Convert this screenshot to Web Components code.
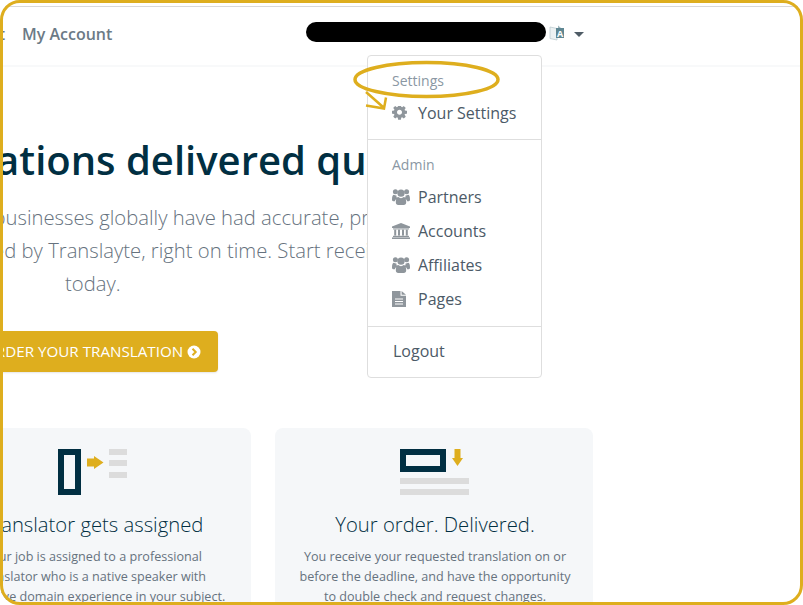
<!DOCTYPE html>
<html lang="en">
<head>
<meta charset="utf-8">
<title>Translayte</title>
<style>
  html, body { margin: 0; padding: 0; background: #fff; }
  body { font-family: "Open Sans", "Liberation Sans", sans-serif; }
</style>
</head>
<body>
<page-frame>
  <site-nav>
    <a slot="links">Contact</a>
    <a slot="links">My Account</a>
    <account-menu slot="menu">
      <menu-group label="Settings">
        <menu-item icon="gear">Your Settings</menu-item>
      </menu-group>
      <menu-group label="Admin">
        <menu-item icon="users">Partners</menu-item>
        <menu-item icon="bank">Accounts</menu-item>
        <menu-item icon="users">Affiliates</menu-item>
        <menu-item icon="file">Pages</menu-item>
      </menu-group>
      <menu-group>
        <menu-item>Logout</menu-item>
      </menu-group>
    </account-menu>
  </site-nav>
  <hero-banner>
    <span slot="title">Translations delivered quickly</span>
    <span slot="line1">Thousands of businesses globally have had accurate, professional</span>
    <span slot="line2">translations delivered by Translayte, right on time. Start receiving</span>
    <span slot="line3">today.</span>
    <span slot="action">ORDER YOUR TRANSLATION</span>
  </hero-banner>
  <step-row>
    <step-card art="assign">
      <span slot="title">Translator gets assigned</span>
      Your job is assigned to a professional<br>translator who is a native speaker with<br>extensive domain experience in your subject.
    </step-card>
    <step-card art="deliver">
      <span slot="title">Your order. Delivered.</span>
      You receive your requested translation on or<br>before the deadline, and have the opportunity<br>to double check and request changes.
    </step-card>
  </step-row>
</page-frame>

<script>
const GOLD = "#deae1e"
const NAVY = "#012f42"

const ICONS = {
  gear: `<svg viewBox="0 0 1536 1536" width="15" height="15"><path fill="currentColor" d="M1024 640q0-106-75-181t-181-75-181 75-75 181 75 181 181 75 181-75 75-181zm512-109v222q0 12-8 23t-20 13l-185 28q-19 54-39 91 35 50 107 138 10 12 10 25t-9 23q-27 37-99 108t-94 71q-12 0-26-9l-138-108q-44 23-91 38-16 136-29 186-7 28-36 28h-222q-14 0-24.5-8.5t-11.5-21.5l-28-184q-49-16-90-37l-141 107q-10 9-25 9-14 0-25-11-126-114-165-168-7-10-7-23 0-12 8-23 15-21 51-66.5t54-70.5q-27-50-41-99l-183-27q-13-2-21-12.5t-8-23.5v-222q0-12 8-23t19-13l186-28q14-46 39-92-40-57-107-138-10-12-10-24 0-10 9-23 26-36 98.5-107.5t94.5-71.5q13 0 26 10l138 107q44-23 91-38 16-136 29-186 7-28 36-28h222q14 0 24.5 8.5t11.5 21.5l28 184q49 16 90 37l142-107q9-9 24-9 13 0 25 10 129 119 165 170 7 8 7 22 0 12-8 23-15 21-51 66.5t-54 70.5q26 50 41 98l183 28q13 2 21 12.5t8 23.5z"/></svg>`,
  users: `<svg viewBox="0 0 18 16" width="18" height="16"><g fill="currentColor"><circle cx="3.400" cy="2.800" r="2.500"/><circle cx="14.600" cy="2.800" r="2.500"/><circle cx="9" cy="4.200" r="3.600"/><path d="M0 10.500C0 7.500.7 5.800 2 5.800c.7.500 1.500.8 2.500.7-.2 1.200.2 2.200 1 3-1.400.4-2.300 1.300-2.600 2.700H1.200C.5 12.200 0 11.600 0 10.500z"/><path d="M18 10.500c0-3-.7-4.700-2-4.700-.7.500-1.500.8-2.500.7.200 1.200-.2 2.200-1 3 1.400.4 2.300 1.300 2.600 2.700h1.700c.7 0 1.200-.6 1.200-1.700z"/><path d="M3.800 13.300c0-3.300 1-5.200 2.500-5.200.7.700 1.700 1.100 2.700 1.100s2-.4 2.700-1.100c1.500 0 2.500 1.900 2.500 5.200 0 1.700-1 2.700-2.400 2.700H6.200c-1.400 0-2.400-1-2.400-2.700z"/></g></svg>`,
  bank: `<svg viewBox="0 0 18 16" width="18" height="16"><g fill="currentColor"><path d="M9 0l9 3.400V5H0V3.400z"/><rect x="1" y="5.400" width="16" height="1"/><rect x="2.200" y="6.600" width="2" height="6"/><rect x="6" y="6.600" width="2" height="6"/><rect x="10" y="6.600" width="2" height="6"/><rect x="13.800" y="6.600" width="2" height="6"/><rect x="1" y="12.800" width="16" height="1.200"/><rect x="0" y="14.400" width="18" height="1.600"/></g></svg>`,
  file: `<svg viewBox="0 0 14 16" width="14" height="16"><path fill="currentColor" fill-rule="evenodd" d="M0 0h8.500v4.800H14V16H0zM9.600 0L14 3.800H9.600zM3 7.400v1.200h8V7.400zM3 9.900v1.200h8V9.900zM3 12.400v1.200h8v-1.200z"/></svg>`
}

const ART = {
  assign: `<svg viewBox="0 0 69 46" width="69" height="46">
    <rect x="3" y="3" width="17" height="40" fill="#f5f7f9" stroke="${NAVY}" stroke-width="6"/>
    <path fill="${GOLD}" d="M29 9.500h7V7l9.500 6.500L36 20v-2.500h-7z"/>
    <g fill="#dcdcdc"><rect x="51" y="0" width="18" height="6"/><rect x="51" y="11" width="18" height="6"/><rect x="51" y="23" width="18" height="6"/></g>
  </svg>`,
  deliver: `<svg viewBox="0 0 69 46" width="69" height="46">
    <rect x="3" y="3" width="40" height="17" fill="#f5f7f9" stroke="${NAVY}" stroke-width="6"/>
    <path fill="${GOLD}" d="M54.500 0h6v9H63l-5.500 8L52 9h2.500z"/>
    <g fill="#dcdcdc"><rect x="0" y="29" width="69" height="6"/><rect x="0" y="40" width="69" height="6"/></g>
  </svg>`
}

class PageFrame extends HTMLElement {
  constructor() {
    super()
    this.attachShadow({ mode: "open" })
    this.shadowRoot.innerHTML = `
      <style>
        :host {
          display: flex;
          flex-direction: column;
          position: relative;
          width: 803px;
          height: 605px;
          padding-top: 6px;
          box-sizing: border-box;
          overflow: hidden;
          background: #fff;
          font-family: "Open Sans", "Liberation Sans", sans-serif;
        }
        .border {
          position: absolute;
          inset: 0;
          border: 3px solid ${GOLD};
          border-radius: 20px;
          box-shadow: 0 0 0 20px #fff;
          pointer-events: none;
          z-index: 5;
        }
      </style>
      <slot></slot>
      <div class="border"></div>
    `
  }
}

class SiteNav extends HTMLElement {
  constructor() {
    super()
    this.attachShadow({ mode: "open" })
    this.shadowRoot.innerHTML = `
      <style>
        :host {
          display: flex;
          align-items: center;
          position: relative;
          height: 54px;
          padding-bottom: 4px;
          flex: none;
          box-sizing: content-box;
          border-top: 1px solid #d9d9d9;
          border-bottom: 2px solid #f8f9fa;
          z-index: 3;
        }
        .links {
          display: flex;
          gap: 17px;
          margin-left: -55px;
          width: 361px;
          flex: none;
          font-size: 16px;
          font-weight: 600;
          color: #6c7a86;
        }
        ::slotted(a) { white-space: nowrap; }
        .pill {
          width: 240px;
          height: 20px;
          background: #000;
          border-radius: 10px;
          flex: none;
          margin-top: -4px;
        }
        .lang { margin: -2px 0 0 3px; flex: none; display: block; }
        .caret {
          width: 0;
          height: 0;
          margin: 0 0 0 9px;
          border: 5px solid transparent;
          border-top-color: #4f5c66;
          border-bottom: 0;
          flex: none;
        }
        .menu {
          position: absolute;
          left: 367px;
          top: 48px;
        }
      </style>
      <div class="links"><slot name="links"></slot></div>
      <div class="pill"></div>
      <svg class="lang" viewBox="0 0 16 16" width="16" height="16">
        <path d="M1 2l7 1.500V15l-7-1.500z" fill="#edf2f3" stroke="#bcccd0" stroke-width=".8"/>
        <rect x="7" y="3" width="8" height="10" fill="#5f8793"/>
        <path d="M9 .5l3 2.500H9z" fill="#9fb6bd"/>
        <text x="8" y="11.500" font-family="Open Sans" font-size="9" font-weight="700" fill="#fff">A</text>
      </svg>
      <div class="caret"></div>
      <div class="menu"><slot name="menu"></slot></div>
    `
  }
}

class AccountMenu extends HTMLElement {
  constructor() {
    super()
    this.attachShadow({ mode: "open" })
    this.shadowRoot.innerHTML = `
      <style>
        :host {
          display: block;
          position: relative;
          width: 175px;
          box-sizing: border-box;
          background: #fff;
          border: 1px solid #dedede;
          border-radius: 4px;
        }
        svg {
          position: absolute;
          left: -18px;
          top: 0;
          overflow: visible;
          pointer-events: none;
        }
      </style>
      <slot></slot>
      <svg width="160" height="60" viewBox="349 55 160 60" fill="none" stroke="${GOLD}" stroke-width="3.500">
        <ellipse cx="425.500" cy="78.500" rx="71.500" ry="17"/>
        <path d="M365 91l17 15M365 104.500l18 3 2-11" stroke-width="2.500"/>
      </svg>
    `
  }
}

class MenuGroup extends HTMLElement {
  constructor() {
    super()
    this.attachShadow({ mode: "open" })
    this.shadowRoot.innerHTML = `
      <style>
        :host {
          display: block;
          padding: 8px 0 10px;
          border-top: 1px solid #dedede;
        }
        :host(:first-child) { border-top: 0; padding-bottom: 9px; }
        :host(:last-child) { padding: 7px 0 9px; }
        .label {
          padding: 7px 24px 6px;
          font-size: 14px;
          line-height: 19px;
          color: #8a97a3;
        }
        .label:empty { display: none; }
      </style>
      <div class="label">${this.getAttribute("label") || ""}</div>
      <slot></slot>
    `
  }
}

class MenuItem extends HTMLElement {
  constructor() {
    super()
    this.attachShadow({ mode: "open" })
    const icon = ICONS[this.getAttribute("icon")]
    this.shadowRoot.innerHTML = `
      <style>
        :host {
          display: flex;
          align-items: center;
          height: 34px;
          padding-left: 25px;
          font-size: 16px;
          color: #4c5a67;
        }
        .icon {
          width: 26px;
          margin-left: -1px;
          flex: none;
          display: flex;
          align-items: center;
          color: #8f969c;
        }
      </style>
      ${icon ? `<span class="icon">${icon}</span>` : ""}
      <slot></slot>
    `
  }
}

class HeroBanner extends HTMLElement {
  constructor() {
    super()
    this.attachShadow({ mode: "open" })
    this.shadowRoot.innerHTML = `
      <style>
        :host {
          display: flex;
          flex-direction: column;
          align-items: flex-start;
          flex: none;
          padding-top: 63px;
          white-space: nowrap;
        }
        h1 {
          margin: 0 0 11px -123px;
          font-size: 40px;
          line-height: 60px;
          font-weight: 600;
          color: ${NAVY};
        }
        .lead {
          font-size: 20.250px;
          line-height: 33px;
          font-weight: 300;
          color: #66727e;
        }
        .lead div:nth-child(1) { margin-left: -135px; }
        .lead div:nth-child(2) { margin-left: -179.500px; }
        .lead div:nth-child(3) { margin-left: 65px; }
        .btn {
          display: flex;
          align-items: center;
          gap: 4px;
          margin: 31px 0 0 -40px;
          padding: 0 17px 2px 24px;
          height: 41px;
          box-sizing: border-box;
          background: ${GOLD};
          border-radius: 4px;
          color: #fff;
          font-size: 15.200px;
          font-weight: 400;
          box-shadow: 0 1px 2px rgba(0,0,0,.1);
        }
        .btn svg { margin-top: 2px; }
      </style>
      <h1><slot name="title"></slot></h1>
      <div class="lead">
        <div><slot name="line1"></slot></div>
        <div><slot name="line2"></slot></div>
        <div><slot name="line3"></slot></div>
      </div>
      <div class="btn">
        <slot name="action"></slot>
        <svg viewBox="0 0 14 14" width="14" height="14">
          <circle cx="7" cy="7" r="6.500" fill="#fff"/>
          <path d="M5.500 3.800L8.700 7l-3.200 3.200" fill="none" stroke="${GOLD}" stroke-width="2"/>
        </svg>
      </div>
    `
  }
}

class StepRow extends HTMLElement {
  constructor() {
    super()
    this.attachShadow({ mode: "open" })
    this.shadowRoot.innerHTML = `
      <style>
        :host {
          display: grid;
          grid-template-columns: 318px 318px;
          gap: 24px;
          margin: 56px 0 0 -67px;
          flex: none;
        }
      </style>
      <slot></slot>
    `
  }
}

class StepCard extends HTMLElement {
  constructor() {
    super()
    this.attachShadow({ mode: "open" })
    this.shadowRoot.innerHTML = `
      <style>
        :host {
          display: block;
          height: 200px;
          padding: 21px 0 0 2px;
          box-sizing: border-box;
          background: #f5f7f9;
          border-radius: 8px;
          text-align: center;
          white-space: nowrap;
          font-size: 12.600px;
          line-height: 20px;
          color: #66727e;
        }
        .art { height: 46px; margin-left: -2px; }
        .art svg { display: block; margin: 0 auto; }
        h3 {
          margin: 14px 0 8px;
          font-size: 20.250px;
          line-height: 30px;
          font-weight: 300;
          color: ${NAVY};
        }
      </style>
      <div class="art">${ART[this.getAttribute("art")]}</div>
      <h3><slot name="title"></slot></h3>
      <slot></slot>
    `
  }
}

customElements.define("page-frame", PageFrame)
customElements.define("site-nav", SiteNav)
customElements.define("account-menu", AccountMenu)
customElements.define("menu-group", MenuGroup)
customElements.define("menu-item", MenuItem)
customElements.define("hero-banner", HeroBanner)
customElements.define("step-row", StepRow)
customElements.define("step-card", StepCard)
</script>
</body>
</html>
